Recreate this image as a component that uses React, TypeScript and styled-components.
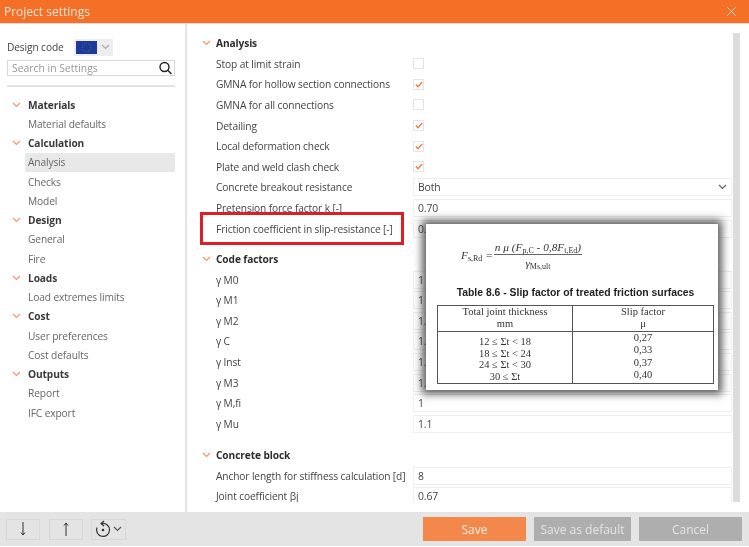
import React from "react";
import styled, { createGlobalStyle } from "styled-components";

const Global = createGlobalStyle`
  html, body { margin: 0; padding: 0; background: #fff; }
  body { font-family: "Open Sans", "Noto Sans", sans-serif; overflow: hidden; }
`;
const Shell = styled.div`
  width: 749px; height: 547px; display: flex; flex-direction: column; position: relative; overflow: hidden; background: #fff;
  filter: blur(.35px);
`;
const TitleBar = styled.header`
  height: 24px; box-sizing: border-box; flex: none; background: #f47027; border-bottom: 1px solid #dcdcdc; display: flex; align-items: center; justify-content: space-between;
  padding: 0 13px 1px 4px; color: #fde6d8; font-size: 12px;
`;
const Body = styled.div`flex: 1; min-height: 0; display: flex;`;
const Sidebar = styled.aside`
  width: 187px; flex: none; box-sizing: border-box; border-right: 2px solid #e4e4e4; padding: 14px 10px 0 7px;
`;
const CodeRow = styled.div`display: flex; align-items: center; height: 18px; gap: 7px; font-size: 10.2px; letter-spacing: -.12px; color: #444;`;
const CodeLabel = styled.span`width: 60px; flex: none; white-space: nowrap;`;
const FlagButton = styled.div`
  display: flex; align-items: center; width: 39px; height: 17px; background: #eee; box-sizing: border-box; padding-left: 2px; gap: 4px;
`;
const Search = styled.div`
  margin-top: 4px; height: 16px; box-sizing: border-box; border: 1px solid #d8d8d8; display: flex; align-items: center; justify-content: space-between;
  padding: 0 1px 0 4px; font-size: 10.4px; color: #999;
`;
const Divider = styled.div`margin-top: 9px; height: 2px; background: #e2e2e2;`;
const Tree = styled.nav`margin-top: 8px; display: flex; flex-direction: column;`;
const TreeHead = styled.div`
  height: 19.25px; display: flex; align-items: center; padding-left: 5px; gap: 7px; font-size: 10.2px; letter-spacing: -.12px; font-weight: 700; color: #3a3a3a;
`;
const TreeItem = styled.div<{ $active?: boolean }>`
  height: 19.25px; margin-left: 18px; padding-left: 3px; display: flex; align-items: center; font-size: 10.2px; letter-spacing: -.12px; color: #666;
  background: ${p => (p.$active ? "#e8e8e8" : "transparent")};
`;
const Main = styled.main`
  flex: 1; min-width: 0; display: flex; padding: 9px 9px 10px 15px; position: relative;
`;
const Form = styled.div`flex: 1; min-width: 0; display: flex; flex-direction: column; overflow: hidden;`;
const SectionHead = styled.div<{ $gap?: number }>`
  height: 20.5px; flex: none; display: flex; align-items: center; gap: 5px; font-size: 10.2px; letter-spacing: -.12px; font-weight: 700; color: #2e2e2e; margin-top: ${p => p.$gap ?? 0}px;
`;
const Row = styled.div`
  height: 20.6px; flex: none; display: flex; align-items: center; padding-left: 14px; font-size: 10.2px; letter-spacing: -.12px; color: #444; position: relative;
`;
const Label = styled.span`width: 197px; flex: none; white-space: nowrap;`;
const Input = styled.div`
  width: 320px; height: 18px; box-sizing: border-box; border: 1px solid #eee; padding: 0 4px; display: flex; align-items: center; justify-content: space-between;
  font-size: 10.4px; color: #444;
`;
const Check = styled.div`
  width: 11px; height: 11px; box-sizing: border-box; border: 1px solid #e4e4e4; display: flex; align-items: center; justify-content: center;
`;
const Scrollbar = styled.div`width: 7px; flex: none; margin: 0 0 0 1px; background: #dcdcdc;`;
const RedBox = styled.div`
  position: absolute; left: 13px; top: 188px; width: 204px; height: 33px; box-sizing: border-box; border: 3px solid #dc1f26; pointer-events: none;
`;
const Popup = styled.figure`
  position: absolute; left: 239px; top: 200px; width: 292px; height: 166px; margin: 0; padding-left: 7px; background: #fff; box-sizing: border-box;
  box-shadow: 0 0 8px 4px rgba(40,40,40,.75); display: flex; flex-direction: column; align-items: center; font-family: "Liberation Serif", serif; color: #333;
`;
const Formula = styled.div`
  align-self: flex-start; margin: 11px 0 0 28px; display: flex; align-items: center; gap: 1px; font-size: 11.3px; font-style: italic; height: 40px;
`;
const Fraction = styled.span`display: inline-flex; flex-direction: column; align-items: center;`;
const Numerator = styled.span`border-bottom: 1px solid #666; padding: 0 1px 1px;`;
const Denominator = styled.span`padding-top: 2px;`;
const Sub = styled.sub`font-size: 8px; font-style: normal; vertical-align: -2px; line-height: 0;`;
const Caption = styled.figcaption`
  margin-top: 12px; font-family: "Liberation Sans", sans-serif; font-weight: 700; font-size: 10.4px; color: #222; white-space: nowrap;
`;
const SlipTable = styled.div`
  margin-top: 7px; width: 277px; height: 79px; flex: none; border: 1px solid #555; box-sizing: border-box; display: grid; grid-template-columns: 135px 1fr; grid-template-rows: 26px minmax(0, 1fr);
  font-size: 10.5px; text-align: center; line-height: 12.3px;
`;
const Cell = styled.div<{ $head?: boolean; $left?: boolean }>`
  border-bottom: ${p => (p.$head ? "1px solid #555" : "none")}; border-right: ${p => (p.$left ? "1px solid #555" : "none")};
  padding-top: ${p => (p.$left && !p.$head ? 4 : 0)}px; line-height: ${p => (p.$left && !p.$head ? "11.7px" : "inherit")}; white-space: pre-line; box-sizing: border-box; min-height: 0;
`;
const Footer = styled.footer`
  height: 34px; flex: none; margin-bottom: 1px; background: #e4e4e4; display: flex; align-items: center; padding: 0 7px 0 6px;
`;
const IconButton = styled.div<{ $wide?: boolean }>`
  width: ${p => (p.$wide ? 35 : 34)}px; height: 21px; box-sizing: border-box; border: 1px solid #d8d8d8; margin-right: 8.500px; display: flex; align-items: center; justify-content: center; color: #333;
`;
const Spacer = styled.div`flex: 1;`;
const ActionButton = styled.div<{ $primary?: boolean; $w: number }>`
  width: ${p => p.$w}px; height: 24px; margin-left: 8px; display: flex; align-items: center; justify-content: center; font-size: 12px;
  background: ${p => (p.$primary ? "#f4874a" : "#aeaeae")}; color: ${p => (p.$primary ? "#fff2ea" : "#e4e4e4")};
`;

const Chevron = ({ color = "#f5966a", size = 9 }: { color?: string; size?: number }) => (
  <svg width={size} height={size - 3} viewBox="0 0 9 6" fill="none" stroke={color} strokeWidth="1.2"><path d="M1 1l3.5 3.5L8 1" /></svg>
);
const Tick = () => (
  <svg width="8" height="7" viewBox="0 0 8 7" fill="none" stroke="#f47a3c" strokeWidth="1.4"><path d="M.8 3.5l2.2 2.2L7.2 1" /></svg>
);
const Flag = () => {
  const dots = Array.from({ length: 12 }, (_, i) => {
    const a = (i / 12) * Math.PI * 2;
    return <circle key={i} cx={10.5 + 4.2 * Math.cos(a)} cy={6.5 + 4.2 * Math.sin(a)} r=".55" fill="#5a6a50" />;
  });
  return <svg width="21" height="13" viewBox="0 0 21 13"><rect width="21" height="13" fill="#1c3a9c" />{dots}</svg>;
};

const tree: [string, string[]][] = [
  ["Materials", ["Material defaults"]],
  ["Calculation", ["Analysis", "Checks", "Model"]],
  ["Design", ["General", "Fire"]],
  ["Loads", ["Load extremes limits"]],
  ["Cost", ["User preferences", "Cost defaults"]],
  ["Outputs", ["Report", "IFC export"]],
];
const checks: [string, boolean][] = [
  ["Stop at limit strain", false],
  ["GMNA for hollow section connections", true],
  ["GMNA for all connections", false],
  ["Detailing", true],
  ["Local deformation check", true],
  ["Plate and weld clash check", true],
];
const factors: [string, string][] = [
  ["γ M0", "1"], ["γ M1", "1"], ["γ M2", "1.25"], ["γ C", "1.5"], ["γ Inst", "1.2"], ["γ M3", "1.25"], ["γ M,fi", "1"], ["γ Mu", "1.1"],
];

export default function App() {
  return (
    <Shell>
      <Global />
      <TitleBar>
        <span>Project settings</span>
        <svg width="9" height="9" viewBox="0 0 9 9" stroke="#fde0cf" strokeWidth="1"><path d="M.5.5l8 8M8.500.5l-8 8" /></svg>
      </TitleBar>
      <Body>
        <Sidebar>
          <CodeRow>
            <CodeLabel>Design code</CodeLabel>
            <FlagButton><Flag /><Chevron color="#aaa" /></FlagButton>
          </CodeRow>
          <Search>
            <span>Search in Settings</span>
            <svg width="15" height="14" viewBox="0 0 15 14" fill="none" stroke="#222" strokeWidth="1.4"><circle cx="6.500" cy="6" r="4.500" /><path d="M10 9.500l3.500 3.500" /></svg>
          </Search>
          <Divider />
          <Tree>
            {tree.map(([head, items]) => (
              <React.Fragment key={head}>
                <TreeHead><Chevron /><span>{head}</span></TreeHead>
                {items.map(i => <TreeItem key={i} $active={i === "Analysis"}>{i}</TreeItem>)}
              </React.Fragment>
            ))}
          </Tree>
        </Sidebar>
        <Main>
          <Form>
            <SectionHead><Chevron /><span>Analysis</span></SectionHead>
            {checks.map(([l, c]) => (
              <Row key={l}><Label>{l}</Label><Check>{c && <Tick />}</Check></Row>
            ))}
            <Row><Label>Concrete breakout resistance</Label><Input><span>Both</span><Chevron color="#666" /></Input></Row>
            <Row><Label>Pretension force factor k [-]</Label><Input>0.70</Input></Row>
            <Row>
              <Label>Friction coefficient in slip-resistance [-]</Label><Input>0.25</Input>
            </Row>
            <SectionHead $gap={10}><Chevron /><span>Code factors</span></SectionHead>
            {factors.map(([l, v]) => (
              <Row key={l}><Label>{l}</Label><Input>{v}</Input></Row>
            ))}
            <SectionHead $gap={11}><Chevron /><span>Concrete block</span></SectionHead>
            <Row><Label>Anchor length for stiffness calculation [d]</Label><Input>8</Input></Row>
            <Row><Label>Joint coefficient βj</Label><Input>0.67</Input></Row>
          </Form>
          <Scrollbar />
          <RedBox />
          <Popup>
            <Formula>
              <span>F<Sub>s,Rd</Sub> =</span>
              <Fraction>
                <Numerator>n μ (F<Sub>p,C</Sub> - 0,8F<Sub>t,Ed</Sub>)</Numerator>
                <Denominator>γ<Sub>Ms,ult</Sub></Denominator>
              </Fraction>
            </Formula>
            <Caption>Table 8.6 - Slip factor of treated friction surfaces</Caption>
            <SlipTable>
              <Cell $head $left>{"Total joint thickness\nmm"}</Cell>
              <Cell $head>{"Slip factor\nμ"}</Cell>
              <Cell $left>{"12 ≤ Σt < 18\n18 ≤ Σt < 24\n24 ≤ Σt < 30\n30 ≤ Σt"}</Cell>
              <Cell>{"0,27\n0,33\n0,37\n0,40"}</Cell>
            </SlipTable>
          </Popup>
        </Main>
      </Body>
      <Footer>
        <IconButton>
          <svg width="8" height="14" viewBox="0 0 8 14" fill="none" stroke="#333" strokeWidth="1"><path d="M4 0v13M2 10.500L4 13l2-2.500" /></svg>
        </IconButton>
        <IconButton>
          <svg width="8" height="14" viewBox="0 0 8 14" fill="none" stroke="#333" strokeWidth="1"><path d="M4 14V1M2 3.500L4 1l2 2.500" /></svg>
        </IconButton>
        <IconButton $wide>
          <svg width="18" height="18" viewBox="0 0 18 18" fill="none" stroke="#333" strokeWidth="1.2"><path d="M7 3.500a6.500 6.500 0 1 1-5 4" /><path d="M9 1L6 3.500 9 6" /><circle cx="8" cy="10" r=".7" fill="#333" /></svg>
          <Chevron color="#555" />
        </IconButton>
        <Spacer />
        <ActionButton $primary $w={103}>Save</ActionButton>
        <ActionButton $w={97}>Save as default</ActionButton>
        <ActionButton $w={103}>Cancel</ActionButton>
      </Footer>
    </Shell>
  );
}
